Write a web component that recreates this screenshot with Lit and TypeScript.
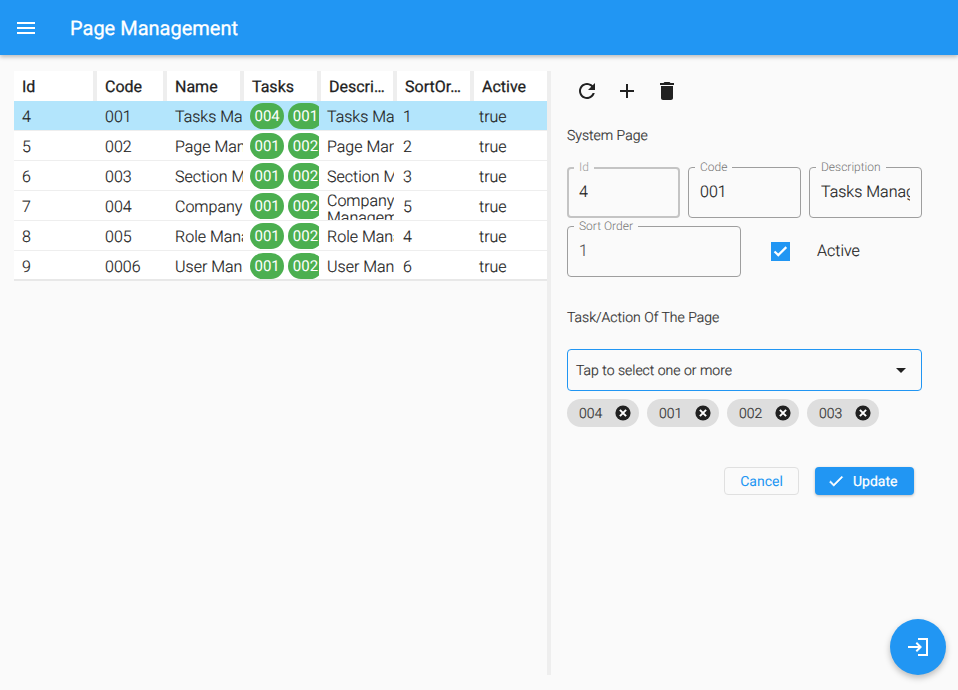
import { LitElement, css, html, svg } from 'lit';
import { customElement } from 'lit/decorators.js';

const ICONS: Record<string, string> = {
  menu: 'M3 18h18v-2H3v2zm0-5h18v-2H3v2zm0-7v2h18V6H3z',
  refresh:
    'M17.65 6.35C16.2 4.9 14.21 4 12 4c-4.42 0-7.99 3.58-7.99 8s3.57 8 7.99 8c3.73 0 6.84-2.55 7.73-6h-2.08c-.82 2.33-3.04 4-5.65 4-3.31 0-6-2.69-6-6s2.69-6 6-6c1.66 0 3.14.69 4.22 1.78L13 11h7V4l-2.35 2.35z',
  add: 'M19 13h-6v6h-2v-6H5v-2h6V5h2v6h6v2z',
  trash: 'M6 19c0 1.1.9 2 2 2h8c1.1 0 2-.9 2-2V7H6v12zM19 4h-3.5l-1-1h-5l-1 1H5v2h14V4z',
  check: 'M9 16.17L4.83 12l-1.42 1.41L9 19 21 7l-1.41-1.41z',
  drop: 'M7 10l5 5 5-5z',
  login: 'M11 7L9.6 8.4l2.6 2.6H2v2h10.2l-2.6 2.6L11 17l5-5-5-5zm9 12h-8v2h10V3H12v2h8v14z',
};

const icon = (name: string, size = 24) =>
  html`<svg class="icon" width=${size} height=${size} viewBox="0 0 24 24" fill="currentColor">
    ${svg`<path d=${ICONS[name]}></path>`}
  </svg>`;

// chip delete: dark disc with a heavier cross than the stock cancel glyph
const chipClose = html`<svg class="icon" width="18" height="18" viewBox="0 0 18 18">
  ${svg`<circle cx="9" cy="9" r="7.6" fill="#212121"></circle>
  <path d="M5.9 5.9l6.2 6.2M12.1 5.9l-6.2 6.2" stroke="#fff" stroke-width="2" fill="none"></path>`}
</svg>`;

const tick = html`<svg class="icon" width="19" height="19" viewBox="0 0 19 19">
  ${svg`<path d="M3.5 9.5l3.8 3.6 8-8" stroke="#fff" stroke-width="2.2" fill="none"></path>`}
</svg>`;

const COLUMNS = ['Id', 'Code', 'Name', 'Tasks', 'Descri…', 'SortOr…', 'Active'];

const ROWS = [
  { id: '4', code: '001', name: 'Tasks Management', tasks: ['004', '001'], desc: 'Tasks Management', sort: '1' },
  { id: '5', code: '002', name: 'Page Management', tasks: ['001', '002'], desc: 'Page Management', sort: '2' },
  { id: '6', code: '003', name: 'Section Management', tasks: ['001', '002'], desc: 'Section Management', sort: '3' },
  { id: '7', code: '004', name: 'Company Management', tasks: ['001', '002'], desc: 'Company Management', sort: '5' },
  { id: '8', code: '005', name: 'Role Management', tasks: ['001', '002'], desc: 'Role Management', sort: '4' },
  { id: '9', code: '0006', name: 'User Management', tasks: ['001', '002'], desc: 'User Management', sort: '6' },
];

@customElement('app-root')
export class AppRoot extends LitElement {
  static styles = css`
    :host {
      display: block;
      position: relative;
      height: 690px;
      overflow: hidden;
      background: #fafafa;
      color: #212121;
      font-family: Roboto, 'Liberation Sans', sans-serif;
      text-rendering: geometricPrecision;
    }
    .icon {
      display: block;
      flex: none;
    }
    .appbar {
      position: relative;
      height: 55px;
      display: flex;
      align-items: center;
      padding-left: 14px;
      gap: 32px;
      background: #2196f3;
      color: #fff;
      box-shadow: 0 2px 4px rgba(0, 0, 0, 0.25);
    }
    .appbar h1 {
      margin: 0;
      font-size: 20px;
      font-weight: 400;
      -webkit-text-stroke: 0.3px;
    }
    .main {
      display: flex;
      height: 604px;
      padding-top: 16px;
    }
    .left {
      width: 533px;
      margin-left: 14px;
      flex: none;
    }
    .grid {
      display: grid;
      grid-template-columns: 83px 70px 77px 77px 76px 77px 73px;
    }
    .heads {
      background: #eeeeee;
    }
    .head {
      height: 30px;
      display: flex;
      align-items: center;
      box-sizing: border-box;
      padding-left: 8px;
      margin-right: 4px;
      background: #fff;
      font-size: 16px;
      font-weight: 400;
      -webkit-text-stroke: 0.25px;
      white-space: nowrap;
    }
    .head:last-child {
      margin-right: 0;
    }
    .row {
      height: 30px;
      box-sizing: border-box;
      border-bottom: 1px solid #eeeeee;
      background: #fff;
    }
    .row.selected {
      background: #b3e5fc;
    }
    .row.last {
      border-bottom: 2px solid #e8e8e8;
    }
    .cell {
      height: 29px;
      box-sizing: border-box;
      display: flex;
      align-items: center;
      padding: 1px 0 0 8px;
      overflow: hidden;
      font-size: 16px;
      font-weight: 300;
      -webkit-text-stroke: 0.15px;
      white-space: nowrap;
    }
    .cell.clip {
      margin-right: 1px;
    }
    .cell.desc {
      padding-left: 6px;
      margin-right: 3px;
    }
    .cell.desc.wrap {
      align-items: flex-start;
      white-space: normal;
      line-height: 17px;
    }
    .cell.tasks {
      padding-left: 6px;
      gap: 4px;
      margin-right: 2px;
    }
    .cell.sort {
      padding-left: 6px;
    }
    .cell.state {
      padding-left: 5px;
    }
    .pill {
      flex: none;
      height: 26px;
      padding: 0 4.5px;
      border-radius: 13px;
      display: flex;
      align-items: center;
      background: #4caf50;
      color: #fff;
      font-size: 15px;
      font-weight: 400;
      -webkit-text-stroke: 0;
    }
    .divider {
      width: 4px;
      flex: none;
      background: #eeeeee;
    }
    .right {
      flex: 1;
      padding: 8px 36px 0 16px;
    }
    .tools {
      display: flex;
      gap: 16px;
      padding-left: 8px;
    }
    .caption {
      margin: 0;
      padding-top: 1px;
      font-size: 14px;
      font-weight: 300;
      -webkit-text-stroke: 0.2px;
      color: #333333;
      line-height: 16px;
    }
    .fields {
      display: grid;
      grid-template-columns: 113px 113px 113px;
      gap: 8px;
      margin-top: 23px;
    }
    .field {
      position: relative;
      height: 51px;
      box-sizing: border-box;
      border: 1px solid #9e9e9e;
      border-radius: 4px;
      display: flex;
      align-items: center;
      padding: 0 11px 2px;
      font-size: 16px;
      font-weight: 300;
      -webkit-text-stroke: 0.15px;
    }
    .field.disabled {
      border: 2px solid #c4c4c4;
      padding: 0 10px 2px;
    }
    .field .value {
      overflow: hidden;
      white-space: nowrap;
    }
    .field label {
      position: absolute;
      top: -8px;
      left: 6px;
      padding: 0 5px;
      background: #fafafa;
      color: #757575;
      font-size: 12px;
      line-height: 14px;
      font-weight: 300;
      -webkit-text-stroke: 0;
    }
    .field.disabled label {
      left: 5px;
      top: -9px;
      color: #9e9e9e;
    }
    .second {
      display: flex;
      align-items: center;
      margin-top: 8px;
    }
    .second .field {
      width: 174px;
      color: #555555;
    }
    .checkbox {
      width: 19px;
      height: 19px;
      margin-left: 30px;
      background: #2196f3;
    }
    .active {
      margin: 0 0 3px 27px;
      font-size: 16px;
      font-weight: 300;
      -webkit-text-stroke: 0.15px;
    }
    .select {
      height: 42px;
      margin-top: 23px;
      box-sizing: border-box;
      border: 1px solid #2196f3;
      border-radius: 4px;
      display: flex;
      align-items: center;
      justify-content: space-between;
      padding: 0 8px;
      font-size: 14px;
      font-weight: 300;
      -webkit-text-stroke: 0.2px;
      color: #333333;
    }
    .select span,
    .chip span,
    .btn span {
      padding-top: 2px;
    }
    .select .icon {
      color: #212121;
    }
    .chips {
      display: flex;
      gap: 8px;
      margin-top: 8px;
    }
    .chip {
      height: 28px;
      width: 72px;
      box-sizing: border-box;
      padding: 0 7px 0 12px;
      border-radius: 14px;
      display: flex;
      align-items: center;
      justify-content: space-between;
      background: #dedede;
      font-size: 14px;
      font-weight: 300;
      -webkit-text-stroke: 0.2px;
      color: #333333;
    }
    .actions {
      display: flex;
      justify-content: flex-end;
      gap: 16px;
      margin-top: 40px;
      padding-right: 8px;
    }
    .btn {
      height: 28px;
      box-sizing: border-box;
      border-radius: 4px;
      display: flex;
      align-items: center;
      font-size: 14px;
      font-weight: 400;
    }
    .btn.cancel {
      width: 75px;
      justify-content: center;
      border: 1px solid #e0e0e0;
      color: #2196f3;
    }
    .btn.update {
      width: 99px;
      padding-left: 12px;
      gap: 8px;
      background: #2196f3;
      color: #fff;
      -webkit-text-stroke: 0.2px;
      box-shadow: 0 1px 3px rgba(0, 0, 0, 0.25);
    }
    .btn.update .icon {
      stroke: currentColor;
      stroke-width: 0.7;
    }
    .fab {
      position: absolute;
      right: 12px;
      bottom: 15px;
      width: 56px;
      height: 56px;
      border-radius: 50%;
      display: flex;
      align-items: center;
      justify-content: center;
      background: #2196f3;
      color: #fff;
      box-shadow: 0 3px 6px rgba(0, 0, 0, 0.25);
    }
  `;

  render() {
    return html`
      <header class="appbar">
        ${icon('menu')}
        <h1>Page Management</h1>
      </header>
      <div class="main">
        <section class="left">
          <div class="grid heads">${COLUMNS.map((c) => html`<div class="head">${c}</div>`)}</div>
          ${ROWS.map(
            (r, i) => html`
              <div class="row grid ${i === 0 ? 'selected' : ''} ${i === ROWS.length - 1 ? 'last' : ''}">
                <div class="cell">${r.id}</div>
                <div class="cell">${r.code}</div>
                <div class="cell clip">${r.name}</div>
                <div class="cell tasks">${r.tasks.map((t) => html`<span class="pill">${t}</span>`)}</div>
                <div class="cell desc ${r.id === '7' ? 'wrap' : ''}">${r.desc}</div>
                <div class="cell sort">${r.sort}</div>
                <div class="cell state">true</div>
              </div>
            `,
          )}
        </section>
        <div class="divider"></div>
        <section class="right">
          <div class="tools">${icon('refresh')}${icon('add')}${icon('trash')}</div>
          <p class="caption" style="margin-top:24px">System Page</p>
          <div class="fields">
            <div class="field disabled"><label>Id</label><span class="value">4</span></div>
            <div class="field"><label>Code</label><span class="value">001</span></div>
            <div class="field"><label>Description</label><span class="value">Tasks Management</span></div>
          </div>
          <div class="second">
            <div class="field"><label>Sort Order</label><span class="value">1</span></div>
            <div class="checkbox">${tick}</div>
            <span class="active">Active</span>
          </div>
          <p class="caption" style="margin-top:32px">Task/Action Of The Page</p>
          <div class="select">
            <span>Tap to select one or more</span>
            ${icon('drop')}
          </div>
          <div class="chips">
            ${['004', '001', '002', '003'].map((c) => html`<div class="chip"><span>${c}</span>${chipClose}</div>`)}
          </div>
          <div class="actions">
            <div class="btn cancel"><span>Cancel</span></div>
            <div class="btn update">${icon('check', 18)}<span>Update</span></div>
          </div>
        </section>
      </div>
      <div class="fab">${icon('login')}</div>
    `;
  }
}
